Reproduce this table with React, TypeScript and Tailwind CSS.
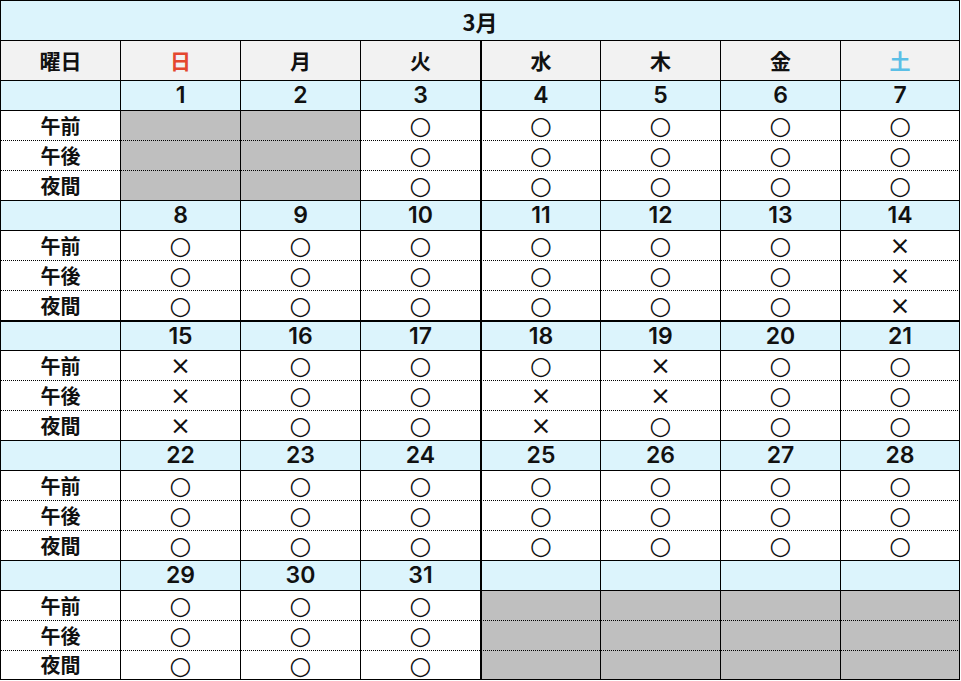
import React from 'react';

type Mark = '○' | '×' | null;

interface Week {
  dates: (number | null)[];
  // slots[dayIndex] = [午前, 午後, 夜間]; null day = gray (no service)
  slots: (Mark[] | null)[];
}

const O: Mark[] = ['○', '○', '○'];

const weeks: Week[] = [
  { dates: [1, 2, 3, 4, 5, 6, 7], slots: [null, null, O, O, O, O, O] },
  { dates: [8, 9, 10, 11, 12, 13, 14], slots: [O, O, O, O, O, O, ['×', '×', '×']] },
  {
    dates: [15, 16, 17, 18, 19, 20, 21],
    slots: [['×', '×', '×'], O, O, ['○', '×', '×'], ['×', '×', '○'], O, O],
  },
  { dates: [22, 23, 24, 25, 26, 27, 28], slots: [O, O, O, O, O, O, O] },
  { dates: [29, 30, 31, null, null, null, null], slots: [O, O, O, null, null, null, null] },
];

const days = ['日', '月', '火', '水', '木', '金', '土'];
const slotLabels = ['午前', '午後', '夜間'];

// every cell draws only its top and left rule; the column after 火 has a heavier one
const colBorder = (i: number) =>
  `${i === 3 ? 'border-l-2' : 'border-l'} ${i === 6 ? 'border-r' : ''}`;

const App = () => {
  return (
    <div
      className="w-[961px] h-[681px] bg-white text-[#111]"
      style={{ fontFamily: '"Noto Sans CJK JP", "Noto Sans", sans-serif' }}
    >
      <table className="table-fixed border-separate border-spacing-0 w-[960px]">
        <colgroup>
          {Array.from({ length: 8 }).map((_, i) => (
            <col key={i} className="w-[120px]" />
          ))}
        </colgroup>
        <tbody>
          <tr className="h-[40px]">
            <td colSpan={8} className="border-t border-x border-black bg-[#dcf4fc] text-center text-[22px] font-semibold leading-none p-0">
              3月
            </td>
          </tr>
          <tr className="h-[40px]">
            <td className="border-t border-l border-black bg-[#f2f2f2] text-center text-[21px] font-bold leading-none p-0">曜日</td>
            {days.map((d, i) => (
              <td
                key={d}
                className={`${colBorder(i)} border-t border-black bg-[#f2f2f2] text-center text-[21px] font-bold leading-none p-0 ${
                  i === 0 ? 'text-[#e4472f]' : i === 6 ? 'text-[#5bbfe6]' : ''
                }`}
              >
                {d}
              </td>
            ))}
          </tr>
          {weeks.map((w, wi) => (
            <React.Fragment key={wi}>
              <tr className="h-[30px]">
                <td className={`${wi === 2 ? 'border-t-2' : 'border-t'} border-l border-black bg-[#dcf4fc] p-0`} />
                {w.dates.map((d, i) => (
                  <td
                    key={i}
                    className={`${colBorder(i)} ${wi === 2 ? 'border-t-2' : 'border-t'} border-black bg-[#dcf4fc] text-center font-['Inter',sans-serif] text-[23px] font-semibold leading-none p-0`}
                  >
                    {d ?? ''}
                  </td>
                ))}
              </tr>
              {slotLabels.map((label, si) => {
                const last = wi === weeks.length - 1 && si === 2;
                const top = si === 0 ? 'border-t border-solid' : 'border-t border-dotted';
                return (
                  <tr key={label} className="h-[30px]">
                    <td
                      className={`${top} border-l [border-left-style:solid] border-black ${
                        last ? 'border-b [border-bottom-style:solid]' : ''
                      } text-center text-[20px] font-bold leading-none p-0`}
                    >
                      {label}
                    </td>
                    {w.slots.map((s, i) => (
                      <td
                        key={i}
                        className={`${top} ${colBorder(i)} [border-left-style:solid] [border-right-style:solid] ${
                          last ? 'border-b [border-bottom-style:solid]' : ''
                        } border-black ${s ? 'bg-white' : 'bg-[#bfbfbf]'} text-center font-['DejaVu_Sans',sans-serif] text-[25px] leading-none p-0`}
                      >
                        {s ? s[si] : ''}
                      </td>
                    ))}
                  </tr>
                );
              })}
            </React.Fragment>
          ))}
        </tbody>
      </table>
    </div>
  );
};

export default App;
